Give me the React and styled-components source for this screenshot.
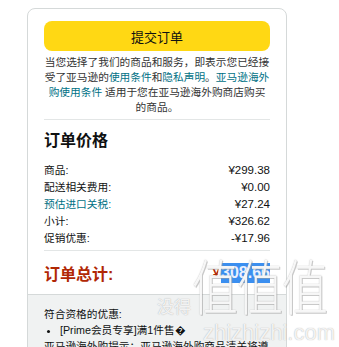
import styled, { createGlobalStyle } from "styled-components";

const GlobalStyle = createGlobalStyle`
  html, body {
    margin: 0;
    padding: 0;
    background: #fff;
  }
  body {
    font-family: "Liberation Sans", "Noto Sans CJK SC", sans-serif;
    color: #0f1111;
    overflow: hidden;
  }
`;

const Page = styled.div`
  position: relative;
  width: 339px;
  height: 347px;
  overflow: hidden;
  padding: 8px 0 0 27px;
  box-sizing: border-box;
`;

const Card = styled.div`
  width: 260px;
  box-sizing: border-box;
  border: 1px solid #d5d9d9;
  border-radius: 8px;
  overflow: hidden;
`;

const Inner = styled.div`
  padding: 12px 16px 0;
`;

const SubmitButton = styled.button`
  display: block;
  width: 100%;
  height: 30px;
  border: none;
  border-radius: 8px;
  background: #ffd814;
  color: #0f1111;
  font-family: inherit;
  font-size: 13px;
  cursor: pointer;
  margin-bottom: 4px;
`;

const Legal = styled.p`
  margin: 0;
  text-align: center;
  font-size: 10.7px;
  line-height: 15px;
  color: #333;
`;

const Link = styled.a`
  color: #007185;
  text-decoration: none;
`;

const Divider = styled.hr`
  border: none;
  border-top: 1px solid #e3e6e6;
  margin: ${(p) => p.$m || "4px 0 0"};
`;

const Heading = styled.h3`
  margin: 10px 0 10px;
  font-size: 16px;
  line-height: 22px;
  font-weight: 700;
`;

const Rows = styled.div`
  display: flex;
  flex-direction: column;
  margin-bottom: 3px;
`;

const Row = styled.div`
  display: flex;
  justify-content: space-between;
  font-size: 10.7px;
  line-height: 17px;
  color: ${(p) => (p.$link ? "#007185" : "#0f1111")};
`;

const Amount = styled.span`
  color: #0f1111;
  font-size: 11.5px;
`;

const TotalRow = styled.div`
  display: flex;
  justify-content: space-between;
  align-items: center;
  height: 24px;
  margin: 10px 0 9px;
  color: #b12704;
  font-size: 16px;
  font-weight: 700;
`;

const TotalValue = styled.span`
  display: flex;
  align-items: center;
  gap: 1px;
`;

const Yen = styled.span`
  color: #b12704;
  font-size: 13px;
`;

const Selected = styled.span`
  background: #3b8ff0;
  color: #e8f0ff;
  padding: 1px 0;
  line-height: 18px;
`;

const Offers = styled.div`
  background: #f0f2f2;
  border-top: 1px solid #d5d9d9;
  padding: 11px 16px 20px;
  font-size: 10.7px;
  line-height: 16px;
  color: #0f1111;
`;

const OfferList = styled.ul`
  margin: 0;
  padding: 0 0 0 16px;
  list-style: disc;
`;

const Watermark = styled.div`
  position: absolute;
  left: 0;
  top: 0;
  width: 339px;
  height: 347px;
  pointer-events: none;
`;

const WmBig = styled.span`
  position: absolute;
  left: 192px;
  top: 241px;
  font-family: "Noto Sans CJK SC", sans-serif;
  font-size: 46px;
  font-weight: 300;
  letter-spacing: -1px;
  transform: scaleY(1.3);
  transform-origin: top left;
  color: rgba(255, 255, 255, 0.9);
  text-shadow: 0 0 1px rgba(140, 140, 140, 0.7), 1px 1px 0 rgba(160, 160, 160, 0.5);
`;

const WmSmall = styled.span`
  position: absolute;
  left: ${(p) => p.$x}px;
  top: ${(p) => p.$y}px;
  font-family: "Liberation Sans", "Noto Sans CJK SC", sans-serif;
  font-size: ${(p) => p.$size}px;
  color: rgba(255, 255, 255, 0.85);
  text-shadow: 0 0 1px rgba(130, 130, 130, 0.7);
`;

const prices = [
  { label: "商品:", value: "¥299.38" },
  { label: "配送相关费用:", value: "¥0.00" },
  { label: "预估进口关税:", value: "¥27.24", link: true },
  { label: "小计:", value: "¥326.62" },
  { label: "促销优惠:", value: "-¥17.96" },
];

export default function App() {
  return (
    <Page>
      <GlobalStyle />
      <Card>
        <Inner>
          <SubmitButton>提交订单</SubmitButton>
          <Legal>
            当您选择了我们的商品和服务，即表示您已经接受了亚马逊的<Link href="#">使用条件</Link>和
            <Link href="#">隐私声明</Link>。<Link href="#">亚马逊海外购使用条件</Link> 适用于您在亚马逊海外购商店购买的商品。
          </Legal>
          <Divider />
          <Heading>订单价格</Heading>
          <Rows>
            {prices.map((p) => (
              <Row key={p.label} $link={p.link}>
                <span>{p.label}</span>
                <Amount>{p.value}</Amount>
              </Row>
            ))}
          </Rows>
          <Divider $m="0" />
          <TotalRow>
            <span>订单总计:</span>
            <TotalValue>
              <Yen>¥</Yen>
              <Selected>308.66</Selected>
            </TotalValue>
          </TotalRow>
        </Inner>
        <Offers>
          符合资格的优惠:
          <OfferList>
            <li>[Prime会员专享]满1件售�</li>
          </OfferList>
          亚马逊海外购提示：亚马逊海外购商品清关将遵循海关规定
        </Offers>
      </Card>
      <Watermark>
        <WmSmall $x={157} $y={293} $size={17}>没得</WmSmall>
        <WmBig>值值值</WmBig>
        <WmSmall $x={203} $y={320} $size={22}>zhizhizhi.com</WmSmall>
      </Watermark>
    </Page>
  );
}
